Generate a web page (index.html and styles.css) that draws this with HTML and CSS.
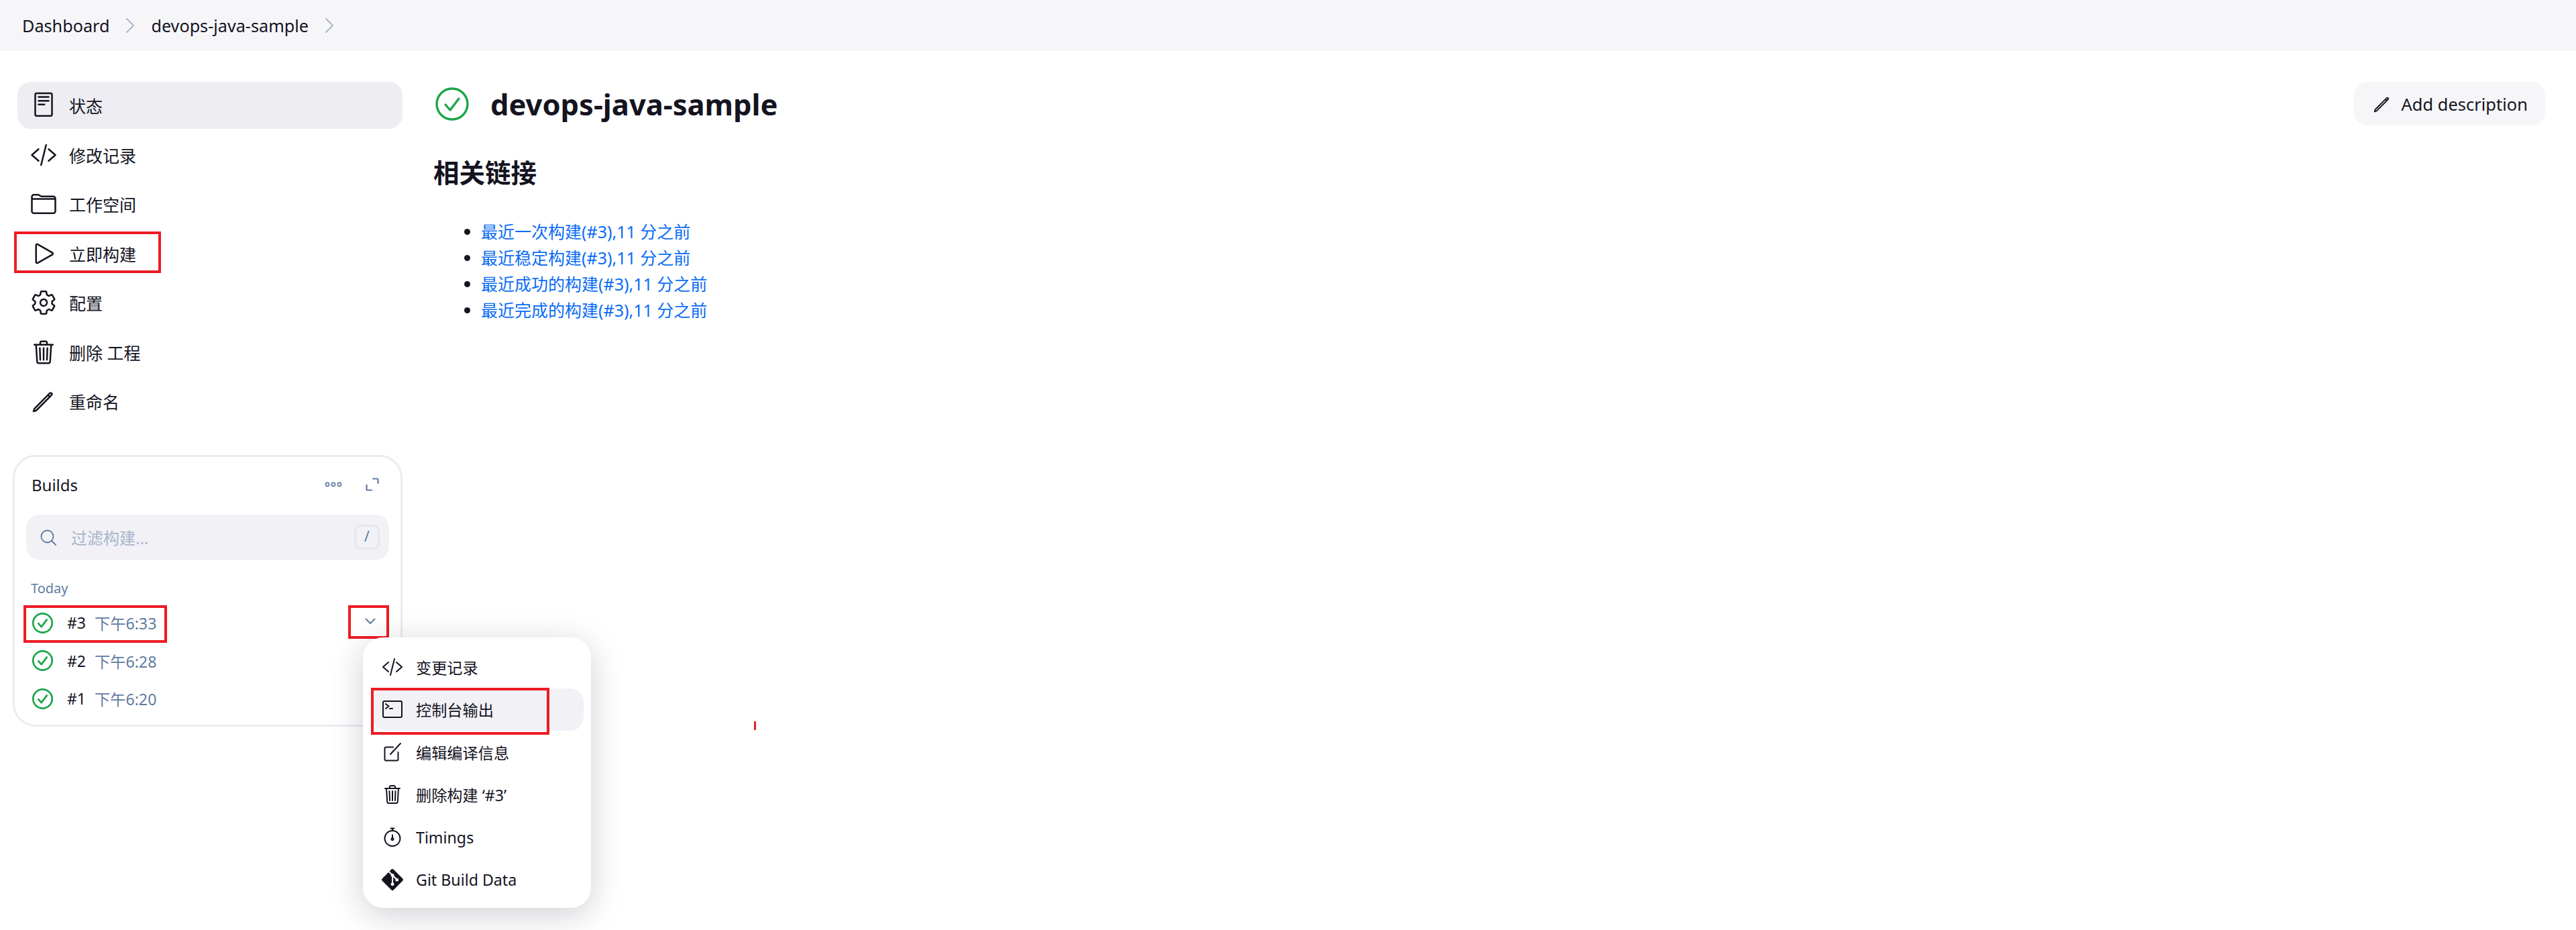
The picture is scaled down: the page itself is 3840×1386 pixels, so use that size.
FILE: index.html
```html
<!DOCTYPE html>
<html lang="zh-CN">
<head>
  <meta charset="UTF-8" />
  <title>devops-java-sample</title>
  <link rel="stylesheet" href="styles.css">
</head>
<body>

<svg class="sprites" aria-hidden="true">
  <symbol id="i-check" viewBox="0 0 50 50">
    <circle cx="25" cy="25" r="23" />
    <path d="M15 26l7 8 13-17" />
  </symbol>
  <symbol id="i-doc" viewBox="0 0 512 512">
    <rect x="96" y="24" width="320" height="432" rx="28" />
    <path d="M160 96h192M160 168h192M160 240h112" />
  </symbol>
  <symbol id="i-code" viewBox="0 0 512 512">
    <path d="M160 368L32 256l128-112M352 368l128-112-128-112M304 64l-96 384" />
  </symbol>
  <symbol id="i-folder" viewBox="0 0 512 512">
    <path d="M440 432H72a40 40 0 01-40-40V120a40 40 0 0140-40h75.89a40 40 0 0122.19 6.72l27.84 18.56a40 40 0 0022.19 6.72H440a40 40 0 0140 40v240a40 40 0 01-40 40zM32 160h448" />
  </symbol>
  <symbol id="i-play" viewBox="0 0 512 512">
    <path d="M112 96v320c0 16 17 26 31 18l281-160c13-8 13-28 0-36L143 78c-14-8-31 2-31 18z" />
  </symbol>
  <symbol id="i-gear" viewBox="0 0 512 512">
    <path d="M262.29 192.31a64 64 0 1057.4 57.4 64.13 64.13 0 00-57.4-57.4zM416.39 256a154.34 154.34 0 01-1.53 20.79l45.21 35.46a10.81 10.81 0 012.45 13.75l-42.77 74a10.81 10.81 0 01-13.14 4.59l-44.9-18.08a16.11 16.11 0 00-15.17 1.75A164.48 164.48 0 01325 400.8a15.94 15.94 0 00-8.82 12.14l-6.73 47.89a11.08 11.08 0 01-10.68 9.17h-85.54a11.11 11.11 0 01-10.69-8.87l-6.72-47.82a16.07 16.07 0 00-9-12.22 155.3 155.3 0 01-21.46-12.57 16 16 0 00-15.11-1.71l-44.89 18.07a10.81 10.81 0 01-13.14-4.58l-42.77-74a10.8 10.8 0 012.45-13.75l38.21-30a16.05 16.05 0 006-14.08c-.36-4.17-.58-8.33-.58-12.5s.21-8.27.58-12.35a16 16 0 00-6.07-13.94l-38.19-30A10.81 10.81 0 0149.48 186l42.77-74a10.81 10.81 0 0113.14-4.59l44.9 18.08a16.11 16.11 0 0015.17-1.75A164.48 164.48 0 01187 111.2a15.94 15.94 0 008.82-12.14l6.73-47.89A11.08 11.08 0 01213.23 42h85.54a11.11 11.11 0 0110.69 8.87l6.72 47.82a16.07 16.07 0 009 12.22 155.3 155.3 0 0121.46 12.57 16 16 0 0015.11 1.71l44.89-18.07a10.81 10.81 0 0113.14 4.58l42.77 74a10.8 10.8 0 01-2.45 13.75l-38.21 30a16.05 16.05 0 00-6.05 14.08c.33 4.14.55 8.3.55 12.47z" />
  </symbol>
  <symbol id="i-trash" viewBox="0 0 512 512">
    <path d="M112 112l20 320c.95 18.49 14.4 32 32 32h184c17.67 0 30.87-13.51 32-32l20-320M80 112h352M192 112V72a23.93 23.93 0 0124-24h80a23.93 23.93 0 0124 24v40M256 176v224M184 176l8 224M328 176l-8 224" />
  </symbol>
  <symbol id="i-pencil" viewBox="0 0 512 512">
    <path d="M64 448l16-51L372 105a24.7 24.7 0 0135 35L115 432zM340 137l35 35" />
  </symbol>
  <symbol id="i-term" viewBox="0 0 512 512">
    <rect x="32" y="64" width="448" height="384" rx="32" />
    <path d="M96 128l72 56-72 56M192 240h64" />
  </symbol>
  <symbol id="i-edit" viewBox="0 0 512 512">
    <path d="M392 256v168a32 32 0 01-32 32H104a32 32 0 01-32-32V168a32 32 0 0132-32h168M208 304L448 48" />
  </symbol>
  <symbol id="i-timer" viewBox="0 0 512 512">
    <circle cx="256" cy="280" r="184" />
    <path d="M256 96V40M216 40h80M256 200v80" />
    <circle cx="256" cy="296" r="24" />
  </symbol>
  <symbol id="i-git" viewBox="0 0 24 24">
    <path class="solid" d="M23.546 10.93L13.067.452c-.604-.603-1.582-.603-2.188 0L8.708 2.627l2.76 2.76c.645-.215 1.379-.07 1.889.441.516.515.658 1.258.438 1.9l2.658 2.66c.645-.223 1.387-.078 1.9.435.721.72.721 1.884 0 2.604-.719.719-1.881.719-2.6 0-.539-.541-.674-1.337-.404-1.996L12.86 8.955v6.525c.176.086.342.203.488.348.713.721.713 1.883 0 2.6-.719.721-1.889.721-2.609 0-.719-.719-.719-1.879 0-2.598.182-.18.387-.316.605-.406V8.835c-.217-.091-.424-.222-.6-.401-.545-.545-.676-1.342-.396-2.009L7.636 3.7.45 10.881c-.6.605-.6 1.584 0 2.189l10.48 10.477c.604.604 1.582.604 2.186 0l10.43-10.43c.605-.603.605-1.582 0-2.187" />
  </symbol>
</svg>

<div class="page">

  <header class="crumbs">
    <a class="crumb">Dashboard</a>
    <svg class="crumb-sep" viewBox="0 0 12 24"><path d="M1 2l10 10L1 22" /></svg>
    <a class="crumb">devops-java-sample</a>
    <svg class="crumb-sep" viewBox="0 0 12 24"><path d="M1 2l10 10L1 22" /></svg>
  </header>

  <div class="layout">
    <aside class="sidebar">
      <nav class="tasks">
        <a class="task active"><svg class="ico"><use href="#i-doc" /></svg>状态</a>
        <a class="task"><svg class="ico"><use href="#i-code" /></svg>修改记录</a>
        <a class="task"><svg class="ico"><use href="#i-folder" /></svg>工作空间</a>
        <a class="task"><svg class="ico"><use href="#i-play" /></svg>立即构建<span class="mark mark-build"></span></a>
        <a class="task"><svg class="ico"><use href="#i-gear" /></svg>配置</a>
        <a class="task"><svg class="ico"><use href="#i-trash" /></svg>删除 工程</a>
        <a class="task"><svg class="ico"><use href="#i-pencil" /></svg>重命名</a>
      </nav>

      <section class="builds">
        <div class="builds-head">
          <span class="builds-title">Builds</span>
          <span class="builds-tools">
            <svg class="tool-dots" viewBox="0 0 26 8"><circle cx="4" cy="4" r="2.6" /><circle cx="13" cy="4" r="2.6" /><circle cx="22" cy="4" r="2.6" /></svg>
            <svg class="tool-expand" viewBox="0 0 20 20"><path d="M11 1.500h6a1.500 1.500 0 011.500 1.500v5M9 18.500H3A1.500 1.500 0 011.500 17v-6" /></svg>
          </span>
        </div>

        <div class="filter">
          <svg class="filter-ico" viewBox="0 0 24 24"><circle cx="10.500" cy="10.500" r="9" /><path d="M17 17l6 6" /></svg>
          <span class="filter-text">过滤构建...</span>
          <kbd class="filter-key">/</kbd>
        </div>

        <div class="day">Today</div>

        <div class="build">
          <svg class="ok ok-small"><use href="#i-check" /></svg>
          <span class="build-no">#3</span>
          <span class="build-time">下午6:33</span>
          <span class="mark mark-row"></span>
          <span class="build-more">
            <svg viewBox="0 0 16 10"><path d="M1.500 1.500L8 8l6.500-6.500" /></svg>
            <span class="mark mark-more"></span>
          </span>
        </div>
        <div class="build">
          <svg class="ok ok-small"><use href="#i-check" /></svg>
          <span class="build-no">#2</span>
          <span class="build-time">下午6:28</span>
        </div>
        <div class="build">
          <svg class="ok ok-small"><use href="#i-check" /></svg>
          <span class="build-no">#1</span>
          <span class="build-time">下午6:20</span>
        </div>
      </section>
    </aside>

    <main class="content">
      <div class="title-row">
        <svg class="ok ok-big"><use href="#i-check" /></svg>
        <h1>devops-java-sample</h1>
        <button class="add-desc"><svg class="add-ico"><use href="#i-pencil" /></svg>Add description</button>
      </div>

      <h2>相关链接</h2>
      <ul class="links">
        <li><a>最近一次构建(#3),11 分之前</a></li>
        <li><a>最近稳定构建(#3),11 分之前</a></li>
        <li><a>最近成功的构建(#3),11 分之前</a></li>
        <li><a>最近完成的构建(#3),11 分之前</a></li>
      </ul>
    </main>
  </div>

  <div class="menu">
    <a class="menu-item"><svg class="menu-ico"><use href="#i-code" /></svg>变更记录</a>
    <a class="menu-item hover"><svg class="menu-ico"><use href="#i-term" /></svg>控制台输出<span class="mark mark-console"></span></a>
    <a class="menu-item"><svg class="menu-ico"><use href="#i-edit" /></svg>编辑编译信息</a>
    <a class="menu-item"><svg class="menu-ico"><use href="#i-trash" /></svg>删除构建 ‘#3’</a>
    <a class="menu-item"><svg class="menu-ico"><use href="#i-timer" /></svg>Timings</a>
    <a class="menu-item"><svg class="menu-ico git"><use href="#i-git" /></svg>Git Build Data</a>
  </div>

  <span class="tick"></span>
</div>

</body>
</html>
```

FILE: styles.css
```css
* {
  box-sizing: border-box;
}
body {
  margin: 0;
  background: #fff;
  color: #14141f;
  font-family: "Noto Sans", "Noto Sans CJK SC", sans-serif;
  font-size: 25px;
}
.sprites {
  display: none;
}
.page {
  position: relative;
  height: 1386px;
  overflow: hidden;
}

/* icons share one stroke look */
svg {
  fill: none;
  stroke: #14141f;
  stroke-linecap: round;
  stroke-linejoin: round;
}

/* breadcrumb bar */
.crumbs {
  display: flex;
  align-items: center;
  height: 76px;
  padding-left: 33px;
  background: #f6f6f9;
}
.crumb {
  font-size: 25.200px;
}
.crumb-sep {
  width: 12px;
  height: 24px;
  margin: 0 25px;
  stroke: #a7b3c9;
  stroke-width: 1.8;
}

.layout {
  display: flex;
}

/* left column */
.sidebar {
  width: 600px;
  padding: 46px 0 0 19px;
  flex: none;
}
.tasks {
  display: flex;
  flex-direction: column;
  gap: 3.5px;
  margin-left: 7px;
}
.task {
  position: relative;
  display: flex;
  align-items: center;
  gap: 18px;
  height: 70px;
  padding-left: 19px;
  border-radius: 20px;
}
.task.active {
  background: #ededf2;
}
.ico {
  width: 40px;
  height: 40px;
  stroke-width: 32;
}

/* red annotation boxes from the screenshot */
.mark {
  position: absolute;
  border: 4px solid #ed1c24;
  pointer-events: none;
}
.mark-build {
  left: -5px;
  top: 2px;
  width: 219px;
  height: 62px;
}
.mark-row {
  left: -4px;
  top: 2px;
  width: 214px;
  height: 56px;
}
.mark-more {
  left: -4px;
  top: 0;
  width: 61px;
  height: 50px;
}
.mark-console {
  left: -2px;
  top: -1px;
  width: 266px;
  height: 70px;
}
.tick {
  position: absolute;
  left: 1124px;
  top: 1075px;
  width: 3px;
  height: 13px;
  background: #ed1c24;
}

/* builds card */
.builds {
  height: 405px;
  margin-top: 45px;
  padding: 23px 17px 0;
  border: 3px solid #ebebf2;
  border-radius: 34px;
}
.builds-head {
  display: flex;
  align-items: center;
  justify-content: space-between;
  height: 36px;
  padding: 0 15px 0 8px;
}
.builds-title {
  font-size: 24px;
}
.builds-tools {
  display: flex;
  align-items: center;
  gap: 35px;
}
.tool-dots {
  width: 26px;
  height: 8px;
  stroke: #5f7b9f;
  stroke-width: 1.6;
}
.tool-expand {
  width: 20px;
  height: 20px;
  stroke: #5f7b9f;
  stroke-width: 2.2;
}
.filter {
  display: flex;
  align-items: center;
  height: 67px;
  margin-top: 27px;
  padding: 0 14px 0 21px;
  background: #f1f1f6;
  border-radius: 20px;
}
.filter-ico {
  width: 24px;
  height: 24px;
  stroke: #5f7b9f;
  stroke-width: 1.8;
}
.filter-text {
  flex: 1;
  margin-left: 22px;
  color: #a9b5ca;
  font-size: 24px;
}
.filter-key {
  width: 38px;
  height: 37px;
  border: 3px solid #e6e6ee;
  border-radius: 9px;
  color: #5f7b9f;
  font-family: inherit;
  font-size: 21px;
  line-height: 29px;
  text-align: center;
}
.day {
  margin: 29px 0 0 7px;
  color: #5f7b9f;
  font-size: 20px;
  line-height: 28px;
}
.build {
  position: relative;
  display: flex;
  align-items: center;
  height: 56.500px;
  padding-left: 9px;
}
.day + .build {
  margin-top: 9px;
}
.ok {
  stroke: #1ea64b;
  flex: none;
}
.ok-small {
  width: 31px;
  height: 31px;
  stroke-width: 4.500;
}
.ok-big {
  width: 50px;
  height: 50px;
  stroke-width: 3.400;
}
.build-no {
  margin-left: 21px;
  font-size: 23px;
}
.build-time {
  margin-left: 13px;
  color: #5f7b9f;
  font-size: 23.200px;
}
.build-more {
  position: absolute;
  right: 0;
  top: 2px;
  display: flex;
  align-items: center;
  justify-content: center;
  width: 57px;
  height: 48px;
}
.build-more svg {
  width: 16px;
  height: 10px;
  stroke: #5f7b9f;
  stroke-width: 2;
}

/* right column */
.content {
  flex: 1;
  padding: 46px 46px 0;
}
.title-row {
  display: flex;
  align-items: center;
  height: 65px;
  padding-left: 3px;
}
h1 {
  flex: 1;
  margin: 0 0 0 32px;
  font-size: 43.500px;
  font-weight: 700;
}
.add-desc {
  display: flex;
  align-items: center;
  gap: 13px;
  height: 65px;
  padding: 0 26px 0 27px;
  background: #f6f6f9;
  border: 0;
  border-radius: 20px;
  color: #14141f;
  font-family: inherit;
  font-size: 25.500px;
}
.add-ico {
  width: 30px;
  height: 30px;
  stroke-width: 32;
}
h2 {
  margin: 42px 0 0;
  font-size: 38.500px;
  font-weight: 700;
  line-height: 56px;
}
.links {
  margin: 41px 0 0;
  padding: 0 0 0 71px;
  line-height: 39px;
}
.links li {
  height: 39px;
}
.links a {
  color: #0a6cf5;
}

/* build actions dropdown */
.menu {
  position: absolute;
  left: 541px;
  top: 950px;
  width: 340px;
  height: 403px;
  padding: 12px 11px 0 14px;
  background: #fff;
  border-radius: 30px;
  box-shadow: 0 10px 50px rgba(20, 20, 50, 0.2);
  font-size: 23.200px;
}
.menu-item {
  position: relative;
  display: flex;
  align-items: center;
  gap: 19px;
  height: 63.500px;
  padding-left: 14px;
  border-radius: 20px;
}
.menu-item.hover {
  background: #f1f1f6;
}
.menu-ico {
  width: 32px;
  height: 32px;
  stroke-width: 32;
}
.menu-ico.git {
  fill: #14141f;
  stroke: none;
}
```
